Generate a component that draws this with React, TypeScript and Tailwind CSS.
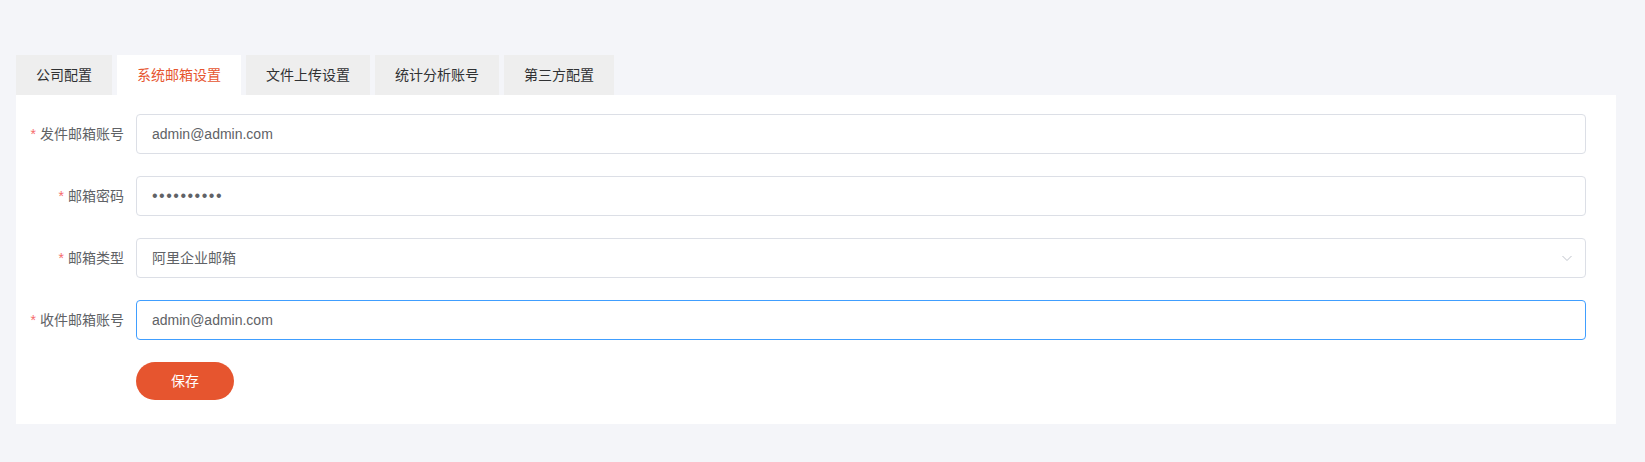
import React from "react";

const tabs = ["公司配置", "系统邮箱设置", "文件上传设置", "统计分析账号", "第三方配置"];

type Field = {
  label: string;
  kind: "text" | "password" | "select";
  value: string;
  focused?: boolean;
};

const fields: Field[] = [
  { label: "发件邮箱账号", kind: "text", value: "admin@admin.com" },
  { label: "邮箱密码", kind: "password", value: "1234567890" },
  { label: "邮箱类型", kind: "select", value: "阿里企业邮箱" },
  { label: "收件邮箱账号", kind: "text", value: "admin@admin.com", focused: true },
];

const FormRow = ({ field }: { field: Field }) => (
  <div className="flex items-center h-[40px]">
    <label className="w-[120px] shrink-0 pr-3 text-right text-[14px] text-[#606266]">
      <span className="text-[#f56c6c] mr-1">*</span>
      {field.label}
    </label>
    <div
      className={`relative flex-1 h-[40px] rounded-[4px] border bg-white flex items-center ${
        field.focused ? "border-[#409eff]" : "border-[#dcdfe6]"
      }`}
    >
      {field.kind === "select" ? (
        <>
          <span className="pl-[15px] text-[14px] text-[#606266]">{field.value}</span>
          <svg
            className="absolute right-[12px] top-1/2 -translate-y-1/2"
            width="12"
            height="12"
            viewBox="0 0 12 12"
            fill="none"
          >
            <polyline points="1.5,4 6,8.5 10.5,4" stroke="#c0c4cc" strokeWidth="1" />
          </svg>
        </>
      ) : (
        <input
          readOnly
          type={field.kind}
          value={field.value}
          className={`w-full h-full px-[15px] bg-transparent outline-none text-[#606266] ${
            field.kind === "password" ? "text-[16px] tracking-[1.5px]" : "text-[14px]"
          }`}
        />
      )}
    </div>
  </div>
);

export default function App() {
  return (
    <div
      className="min-h-[462px] w-full bg-[#f4f5f9] pt-[55px] pl-4 pr-[29px]"
      style={{ fontFamily: '"Liberation Sans", "Noto Sans CJK SC", sans-serif' }}
    >
      <div className="flex gap-[5px]">
        {tabs.map((t, i) => (
          <div
            key={t}
            className={`h-[40px] px-5 flex items-center text-[14px] ${
              i === 1 ? "bg-white text-[#e6552f]" : "bg-[#eeeeee] text-[#303133]"
            }`}
          >
            {t}
          </div>
        ))}
      </div>
      <div className="bg-white pt-[19px] pb-6 pr-[30px] flex flex-col gap-[22px]">
        {fields.map((f) => (
          <FormRow key={f.label} field={f} />
        ))}
        <div className="pl-[120px]">
          <button className="h-[38px] px-[35px] rounded-full bg-[#e6552f] text-white text-[14px]">
            保存
          </button>
        </div>
      </div>
    </div>
  );
}
